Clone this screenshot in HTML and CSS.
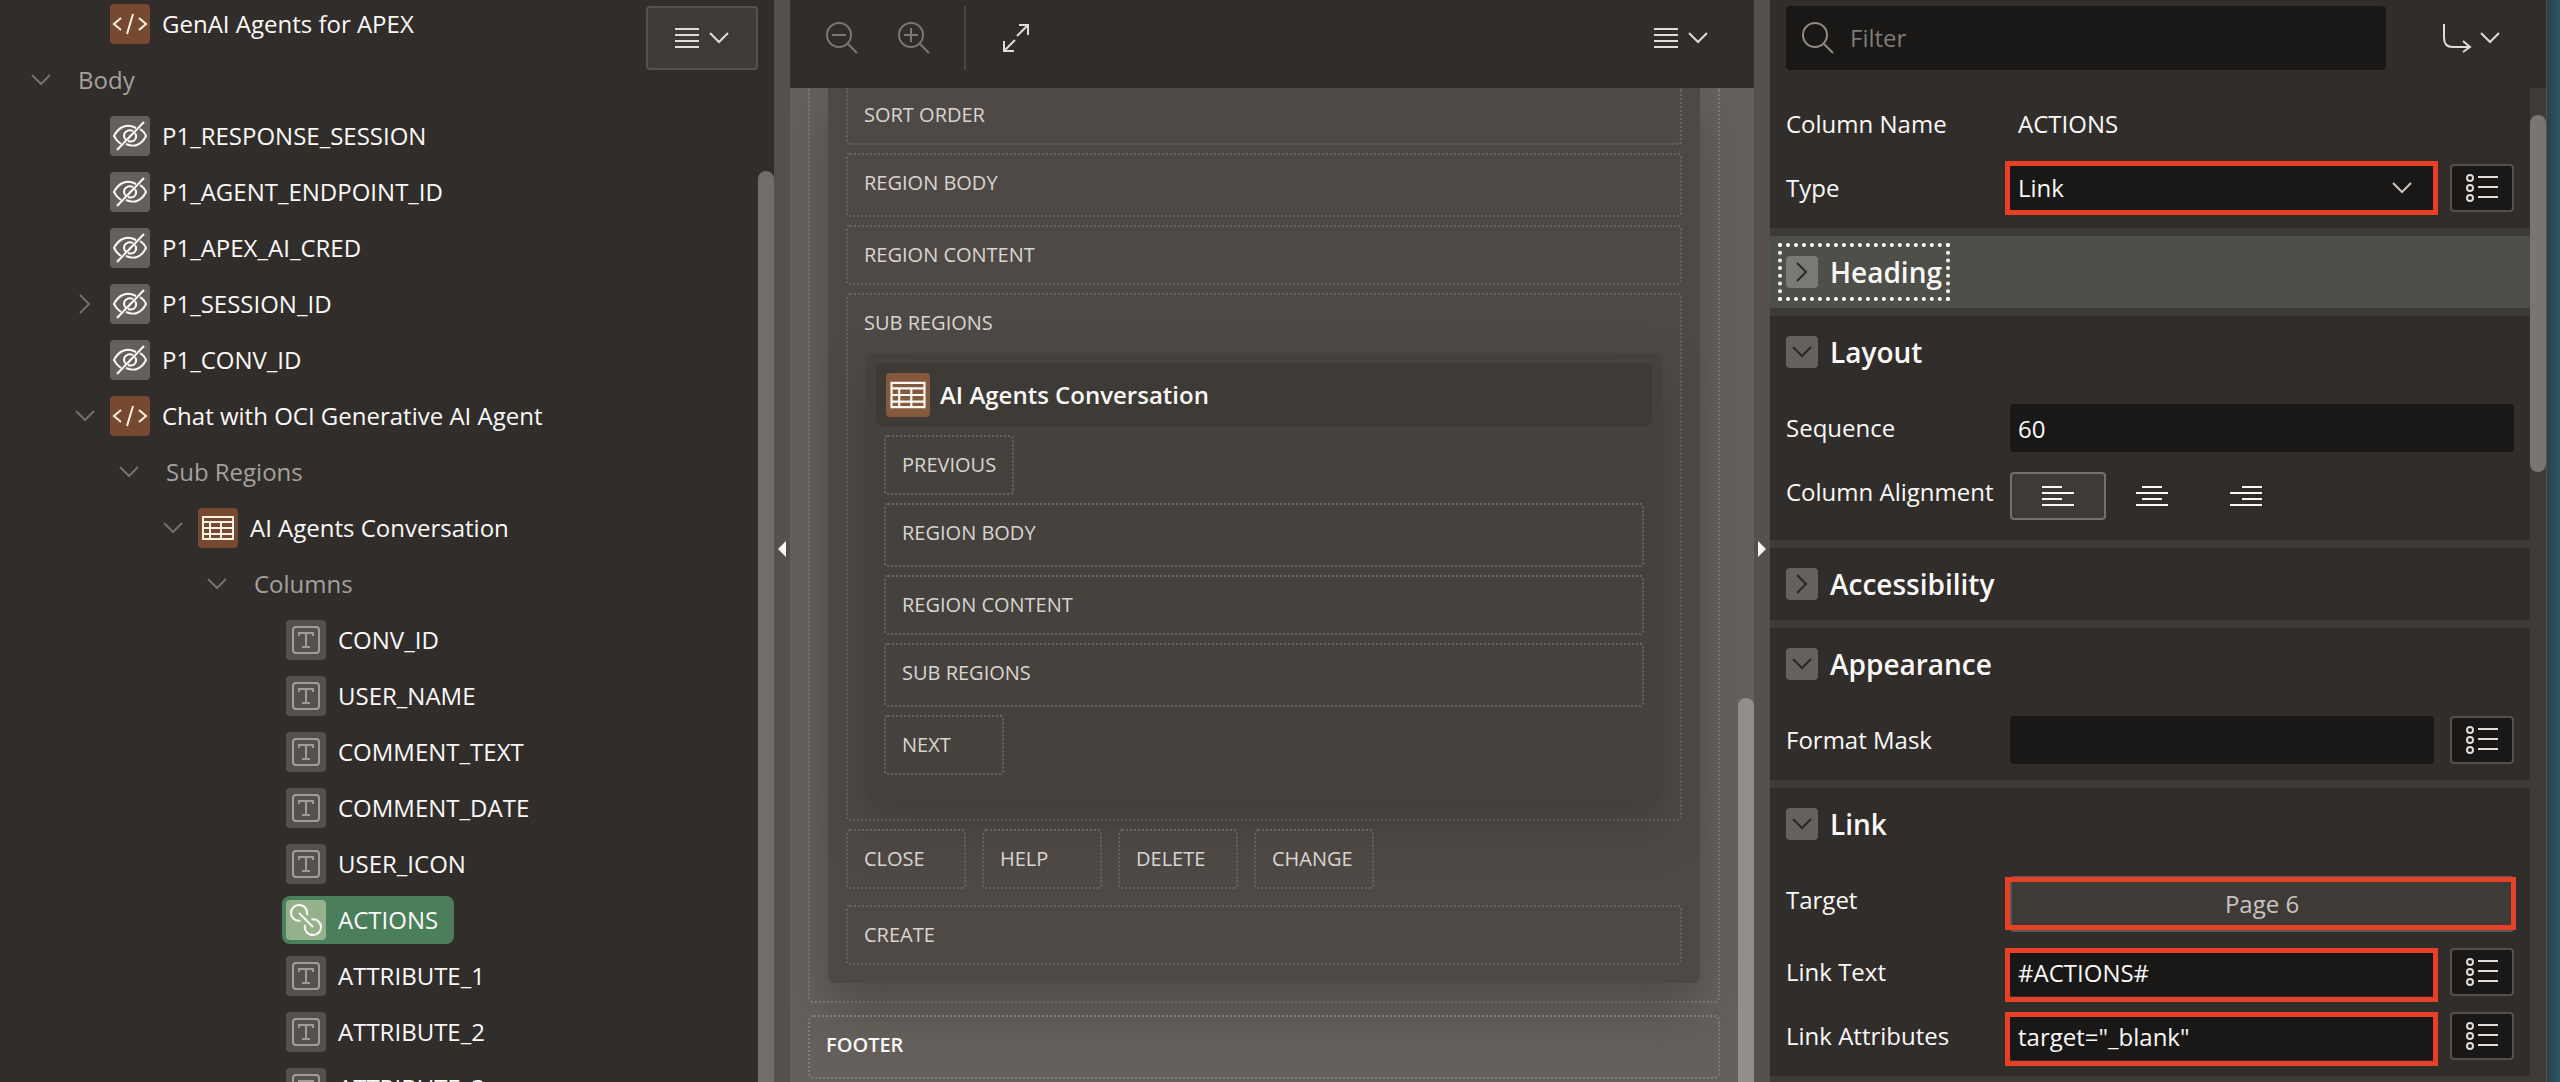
FILE: index.html
```
<!DOCTYPE html>
<html lang="en">
<head>
<meta charset="utf-8">
<title>Page Designer</title>
<link rel="stylesheet" href="styles.css">
</head>
<body>
<svg class="sprite" aria-hidden="true">
  <symbol id="chev-down" viewBox="0 0 20 12"><path d="M1 1l9 9 9-9" fill="none" stroke="currentColor" stroke-width="2"/></symbol>
  <symbol id="chev-right" viewBox="0 0 12 20"><path d="M1 1l9 9-9 9" fill="none" stroke="currentColor" stroke-width="2"/></symbol>
  <symbol id="code" viewBox="0 0 40 40"><path d="M11 14l-7 6 7 6M29 14l7 6-7 6M23 10l-6 20" fill="none" stroke="currentColor" stroke-width="2"/></symbol>
  <symbol id="hidden" viewBox="0 0 40 40"><g fill="none" stroke="currentColor" stroke-width="2"><path d="M26 12C14 6 7 14 4 20c2 4 4 6 7 8M30 13c3 2 5 4 6 7-4 8-11 12-20 8"/><path d="M23 15c-5-2-9 1-9 5 0 2 1 3 2 4M25 17c3 5-1 10-7 8M21 19l-3 4"/><path d="M34 6L7 34"/></g></symbol>
  <symbol id="grid" viewBox="0 0 40 40"><path d="M5 9h30v22H5zM5 14h30M5 20h30M5 26h30M12 14v17M23 14v17" fill="none" stroke="currentColor" stroke-width="2"/></symbol>
  <symbol id="text" viewBox="0 0 40 40"><g fill="none" stroke="currentColor" stroke-width="2"><rect x="7" y="7" width="26" height="26" rx="3"/><path d="M13 16v-3h14v3M20 13v14M16 27h8"/></g></symbol>
  <symbol id="link" viewBox="0 0 40 40"><g fill="none" stroke="currentColor" stroke-width="2"><path d="M14.500 20.500C9 22 5 17 5 13c0-4 3-8 8-8 5 0 9 4 8 10"/><path d="M25.500 19.500C31 18 35 23 35 27c0 4-3 8-8 8-5 0-9-4-8-10"/><path d="M13 13l14 14"/></g></symbol>
  <symbol id="menu" viewBox="0 0 24 20"><path d="M0 1h24M0 7h24M0 13h24M0 19h24" stroke="currentColor" stroke-width="2"/></symbol>
  <symbol id="zoom-out" viewBox="0 0 32 32"><g fill="none" stroke="currentColor" stroke-width="2"><circle cx="13" cy="13" r="12"/><path d="M22 22l9 9M6 13h14"/></g></symbol>
  <symbol id="zoom-in" viewBox="0 0 32 32"><g fill="none" stroke="currentColor" stroke-width="2"><circle cx="13" cy="13" r="12"/><path d="M22 22l9 9M6 13h14M13 6v14"/></g></symbol>
  <symbol id="search" viewBox="0 0 32 32"><g fill="none" stroke="currentColor" stroke-width="2"><circle cx="13" cy="13" r="12"/><path d="M22 22l9 9"/></g></symbol>
  <symbol id="expand" viewBox="0 0 28 30"><path d="M17 2h9v10M26 2L15 13M2 18v10h10M2 28l11-11" fill="none" stroke="currentColor" stroke-width="2"/></symbol>
  <symbol id="goto" viewBox="0 0 30 30"><path d="M2 1v14c0 6 3 9 9 9h17M21 18l7 6-7 5" fill="none" stroke="currentColor" stroke-width="2"/></symbol>
  <symbol id="list" viewBox="0 0 32 28"><g fill="none" stroke="currentColor" stroke-width="2"><circle cx="4" cy="4" r="3"/><circle cx="4" cy="14" r="3"/><circle cx="4" cy="24" r="3"/><path d="M12 3h20M12 13h20M12 23h20"/></g></symbol>
  <symbol id="al-left" viewBox="0 0 32 20"><path d="M0 1h20M0 7h32M0 13h20M0 19h32" stroke="currentColor" stroke-width="2"/></symbol>
  <symbol id="al-center" viewBox="0 0 32 20"><path d="M6 1h20M0 7h32M6 13h20M0 19h32" stroke="currentColor" stroke-width="2"/></symbol>
  <symbol id="al-right" viewBox="0 0 32 20"><path d="M12 1h20M0 7h32M12 13h20M0 19h32" stroke="currentColor" stroke-width="2"/></symbol>
</svg>

<div class="designer">
  <nav class="panel tree-panel" aria-label="Page tree">
    <ul class="tree">
      <li class="row l1"><span class="toggle"></span><span class="node"><svg class="type source"><use href="#code"/></svg>GenAI Agents for APEX</span></li>
      <li class="row l0"><button class="toggle" aria-label="Collapse"><svg class="down"><use href="#chev-down"/></svg></button><span class="node group">Body</span></li>
      <li class="row l1"><span class="toggle"></span><span class="node"><svg class="type item"><use href="#hidden"/></svg>P1_RESPONSE_SESSION</span></li>
      <li class="row l1"><span class="toggle"></span><span class="node"><svg class="type item"><use href="#hidden"/></svg>P1_AGENT_ENDPOINT_ID</span></li>
      <li class="row l1"><span class="toggle"></span><span class="node"><svg class="type item"><use href="#hidden"/></svg>P1_APEX_AI_CRED</span></li>
      <li class="row l1"><button class="toggle" aria-label="Expand"><svg class="right"><use href="#chev-right"/></svg></button><span class="node"><svg class="type item"><use href="#hidden"/></svg>P1_SESSION_ID</span></li>
      <li class="row l1"><span class="toggle"></span><span class="node"><svg class="type item"><use href="#hidden"/></svg>P1_CONV_ID</span></li>
      <li class="row l1"><button class="toggle" aria-label="Collapse"><svg class="down"><use href="#chev-down"/></svg></button><span class="node"><svg class="type source"><use href="#code"/></svg>Chat with OCI Generative AI Agent</span></li>
      <li class="row l2"><button class="toggle" aria-label="Collapse"><svg class="down"><use href="#chev-down"/></svg></button><span class="node group">Sub Regions</span></li>
      <li class="row l3"><button class="toggle" aria-label="Collapse"><svg class="down"><use href="#chev-down"/></svg></button><span class="node"><svg class="type source"><use href="#grid"/></svg>AI Agents Conversation</span></li>
      <li class="row l4"><button class="toggle" aria-label="Collapse"><svg class="down"><use href="#chev-down"/></svg></button><span class="node group">Columns</span></li>
      <li class="row l5"><span class="toggle"></span><span class="node"><svg class="type column"><use href="#text"/></svg>CONV_ID</span></li>
      <li class="row l5"><span class="toggle"></span><span class="node"><svg class="type column"><use href="#text"/></svg>USER_NAME</span></li>
      <li class="row l5"><span class="toggle"></span><span class="node"><svg class="type column"><use href="#text"/></svg>COMMENT_TEXT</span></li>
      <li class="row l5"><span class="toggle"></span><span class="node"><svg class="type column"><use href="#text"/></svg>COMMENT_DATE</span></li>
      <li class="row l5"><span class="toggle"></span><span class="node"><svg class="type column"><use href="#text"/></svg>USER_ICON</span></li>
      <li class="row l5"><span class="toggle"></span><span class="node selected"><svg class="type linked"><use href="#link"/></svg>ACTIONS</span></li>
      <li class="row l5"><span class="toggle"></span><span class="node"><svg class="type column"><use href="#text"/></svg>ATTRIBUTE_1</span></li>
      <li class="row l5"><span class="toggle"></span><span class="node"><svg class="type column"><use href="#text"/></svg>ATTRIBUTE_2</span></li>
      <li class="row l5"><span class="toggle"></span><span class="node"><svg class="type column"><use href="#text"/></svg>ATTRIBUTE_3</span></li>
    </ul>
    <button class="menu-btn boxed" aria-label="Tree menu"><svg class="menu"><use href="#menu"/></svg><svg class="down"><use href="#chev-down"/></svg></button>
    <div class="scroll tree-scroll"><div class="thumb"></div></div>
  </nav>

  <div class="splitter"><span class="arrow arrow-left"></span></div>

  <main class="panel layout-panel">
    <header class="toolbar">
      <button class="icon-btn dim" aria-label="Zoom out"><svg class="lens"><use href="#zoom-out"/></svg></button>
      <button class="icon-btn dim" aria-label="Zoom in"><svg class="lens"><use href="#zoom-in"/></svg></button>
      <span class="divider"></span>
      <button class="icon-btn" aria-label="Expand"><svg class="expand"><use href="#expand"/></svg></button>
      <button class="menu-btn push" aria-label="Layout menu"><svg class="menu"><use href="#menu"/></svg><svg class="down"><use href="#chev-down"/></svg></button>
    </header>
    <div class="canvas">
      <div class="stage">
        <section class="position body-position">
          <div class="region">
            <div class="slot cut">SORT ORDER</div>
            <div class="slot tall">REGION BODY</div>
            <div class="slot">REGION CONTENT</div>
            <div class="slot parent">
              <span>SUB REGIONS</span>
              <div class="subregion">
                <h2 class="region-title"><svg class="region-icon"><use href="#grid"/></svg>AI Agents Conversation</h2>
                <div class="slots">
                  <div class="slot small">PREVIOUS</div>
                  <div class="slot tall">REGION BODY</div>
                  <div class="slot">REGION CONTENT</div>
                  <div class="slot tall">SUB REGIONS</div>
                  <div class="slot small">NEXT</div>
                </div>
              </div>
            </div>
            <div class="slot-row">
              <div class="slot small">CLOSE</div>
              <div class="slot small">HELP</div>
              <div class="slot small">DELETE</div>
              <div class="slot small">CHANGE</div>
            </div>
            <div class="slot">CREATE</div>
          </div>
        </section>
        <section class="position footer-position">FOOTER</section>
      </div>
      <div class="scroll canvas-scroll"><div class="thumb"></div></div>
    </div>
  </main>

  <div class="splitter"><span class="arrow arrow-right"></span></div>

  <aside class="panel props">
    <header class="props-head">
      <label class="filter"><svg class="lens"><use href="#search"/></svg><input type="text" placeholder="Filter" aria-label="Filter"></label>
      <button class="menu-btn goto-btn" aria-label="Go to group"><svg class="goto"><use href="#goto"/></svg><svg class="down"><use href="#chev-down"/></svg></button>
    </header>
    <div class="props-body">
      <form class="groups">
        <section class="group-box first">
          <div class="field"><span class="label">Column Name</span><output class="value">ACTIONS</output></div>
          <div class="field">
            <label class="label" for="type">Type</label>
            <div class="control"><select id="type"><option>Link</option></select><svg class="down select-chev"><use href="#chev-down"/></svg><span class="mark"></span></div>
            <button type="button" class="lov" aria-label="Pick type"><svg><use href="#list"/></svg></button>
          </div>
        </section>
        <section class="group-box hot">
          <h3 class="group-head"><button type="button" class="disclose focused"><span class="fold"><svg class="right"><use href="#chev-right"/></svg></span>Heading</button></h3>
        </section>
        <section class="group-box">
          <h3 class="group-head"><button type="button" class="disclose"><span class="fold"><svg class="down"><use href="#chev-down"/></svg></span>Layout</button></h3>
          <div class="fields">
            <div class="field"><label class="label" for="seq">Sequence</label><div class="control"><input id="seq" type="text" value="60"></div></div>
            <div class="field">
              <span class="label">Column Alignment</span>
              <div class="align">
                <label class="pill on"><input type="radio" name="al" aria-label="Start" checked><svg><use href="#al-left"/></svg></label>
                <label class="pill"><input type="radio" name="al" aria-label="Center"><svg><use href="#al-center"/></svg></label>
                <label class="pill"><input type="radio" name="al" aria-label="End"><svg><use href="#al-right"/></svg></label>
              </div>
            </div>
          </div>
        </section>
        <section class="group-box">
          <h3 class="group-head"><button type="button" class="disclose"><span class="fold"><svg class="right"><use href="#chev-right"/></svg></span>Accessibility</button></h3>
        </section>
        <section class="group-box">
          <h3 class="group-head"><button type="button" class="disclose"><span class="fold"><svg class="down"><use href="#chev-down"/></svg></span>Appearance</button></h3>
          <div class="fields">
            <div class="field"><label class="label" for="mask">Format Mask</label><div class="control"><input id="mask" type="text"></div><button type="button" class="lov" aria-label="Pick format mask"><svg><use href="#list"/></svg></button></div>
          </div>
        </section>
        <section class="group-box">
          <h3 class="group-head"><button type="button" class="disclose"><span class="fold"><svg class="down"><use href="#chev-down"/></svg></span>Link</button></h3>
          <div class="fields">
            <div class="field"><label class="label" for="target">Target</label><div class="control"><button type="button" id="target" class="target">Page 6</button><span class="mark mark-target"></span></div></div>
            <div class="field"><label class="label" for="ltext">Link Text</label><div class="control"><input id="ltext" type="text" value="#ACTIONS#"><span class="mark mark-low"></span></div><button type="button" class="lov" aria-label="Pick link text"><svg><use href="#list"/></svg></button></div>
            <div class="field"><label class="label" for="lattr">Link Attributes</label><div class="control"><input id="lattr" type="text" value="target=&quot;_blank&quot;"><span class="mark mark-low"></span></div><button type="button" class="lov" aria-label="Pick link attributes"><svg><use href="#list"/></svg></button></div>
          </div>
        </section>
      </form>
      <div class="scroll props-scroll"><div class="thumb"></div></div>
    </div>
  </aside>
  <div class="desktop"></div>
</div>
</body>
</html>
```
FILE: styles.css
```
*, *::before, *::after { box-sizing: border-box; }

body {
  margin: 0;
  background: #312d2a;
  color: #fbf9f8;
  font: 24px/32px "Open Sans", "Noto Sans", sans-serif;
}

button, input, select { font: inherit; color: inherit; margin: 0; }
button { border: 0; padding: 0; background: none; cursor: pointer; }
h2, h3, ul { margin: 0; padding: 0; list-style: none; }
svg { display: block; flex: none; }
.sprite { position: absolute; width: 0; height: 0; }

.designer {
  display: grid;
  grid-template-columns: minmax(0, 774fr) 16px minmax(0, 964fr) 16px minmax(0, 776fr) 14px;
  grid-template-rows: 100vh;
  overflow: hidden;
}
.panel { background: #312d2a; overflow: hidden; }
.down { width: 20px; height: 12px; }
.right { width: 12px; height: 20px; }
.menu { width: 24px; height: 20px; }
.lens { width: 32px; height: 32px; }

/* page tree */
.tree-panel { display: flex; align-items: flex-start; }
.tree { flex: 1; margin-top: -4px; min-width: 0; }
.row { display: flex; align-items: center; height: 56px; white-space: nowrap; }
.l0 { padding-left: 20px; }
.l1 { padding-left: 64px; }
.l2 { padding-left: 108px; }
.l3 { padding-left: 152px; }
.l4 { padding-left: 196px; }
.l5 { padding-left: 240px; }
.toggle { width: 42px; height: 40px; display: grid; place-items: center; color: #74706c; flex: none; }
.node { display: flex; align-items: center; gap: 12px; height: 48px; padding: 0 16px 0 4px; border-radius: 8px; }
.group { padding-left: 16px; color: #a5a19e; }
.selected { background: #4b7e5a; }
.type { width: 40px; height: 40px; border-radius: 4px; }
.source { background: #764930; color: #fdf3e4; }
.item { background: #65605c; color: #fbf9f8; }
.column { background: #55504c; color: #a09c98; }
.linked { background: #96b28c; color: #fbf9f8; }

.menu-btn { display: flex; align-items: center; justify-content: center; gap: 10px; height: 64px; padding: 0 26px; color: #dfdcd9; }
.boxed { width: 112px; margin-top: 6px; border: 2px solid #55514c; border-radius: 4px; background: #3e3b36; }

.scroll { width: 16px; flex: none; align-self: stretch; display: flex; }
.thumb { flex: 1; border-radius: 8px; }
.tree-scroll { padding-top: 171px; }
.tree-scroll .thumb { background: #716d6a; border-radius: 8px 8px 0 0; }

/* splitters */
.splitter { background: #55504c; display: flex; align-items: center; justify-content: center; padding-top: 16px; }
.arrow { border: 8px solid transparent; border-width: 8px 0; }
.arrow-left { border-right: 8px solid #fbf9f8; }
.arrow-right { border-left: 8px solid #fbf9f8; }

/* layout editor */
.layout-panel { display: flex; flex-direction: column; }
.toolbar { flex: none; display: flex; align-items: flex-start; height: 88px; padding: 6px 20px 0 16px; }
.icon-btn { width: 72px; height: 64px; display: grid; place-items: center; color: #dfdcd9; }
.dim { color: #7b7773; }
.divider { width: 2px; height: 64px; margin: 0 14px; background: #4b4743; }
.expand { width: 28px; height: 30px; }
.push { margin-left: auto; }

.canvas { flex: 1; min-height: 0; display: flex; background: #65605b; overflow: hidden; }
.stage { flex: 1; min-width: 0; padding: 0 18px; display: flex; flex-direction: column; gap: 12px; }
.position { border: 2px dotted #827d78; border-radius: 6px; }
.body-position { border-top: 0; border-radius: 0 0 6px 6px; padding: 0 18px 18px; }
.footer-position { height: 64px; padding: 14px 16px; font-size: 20px; line-height: 28px; font-weight: 600; }
.region {
  display: flex; flex-direction: column; gap: 8px;
  padding: 0 18px 18px;
  background: #4f4945;
  border-radius: 0 0 8px 8px;
  box-shadow: 0 24px 48px rgba(49, 45, 42, .4);
}
.slot {
  min-height: 60px; padding: 14px 16px;
  border: 2px dotted #6a6560; border-radius: 4px;
  font-size: 20px; line-height: 28px; color: #d9d5d2;
}
.tall { min-height: 64px; }
.cut { min-height: 56px; border-top: 0; border-radius: 0 0 4px 4px; padding-top: 13px; }
.slot-row { display: flex; gap: 16px; margin-bottom: 8px; }
.small { min-width: 120px; align-self: flex-start; }
.parent { padding: 14px 18px 18px; }
.parent > span { margin-left: -2px; }
.subregion {
  margin-top: 16px; padding: 10px 10px 26px;
  background: #45413c; border-radius: 8px;
  box-shadow: 0 24px 48px rgba(49, 45, 42, .4);
}
.region-title {
  display: flex; align-items: center; gap: 10px;
  height: 64px; padding: 0 10px;
  background: #3e3a35; border-radius: 8px;
  font-size: 24px; font-weight: 600; color: #fbf9f8;
}
.region-icon { width: 44px; height: 44px; border-radius: 4px; background: #85593c; }
.slots { display: flex; flex-direction: column; gap: 8px; padding: 8px 8px 0; }
.canvas-scroll { padding-top: 610px; }
.canvas-scroll .thumb { background: #938e8a; border-radius: 8px 8px 0 0; }

/* property editor */
.props { display: flex; flex-direction: column; }
.props-head { flex: none; height: 88px; padding: 6px 20px 0 16px; display: flex; align-items: flex-start; }
.filter { flex: 1; max-width: 600px; height: 64px; display: flex; align-items: center; gap: 16px; padding: 0 16px; background: #191816; border-radius: 4px; color: #8f8b87; margin-right: auto; }
.filter input { flex: 1; min-width: 0; border: 0; padding: 0; background: none; outline: 0; }
.filter input::placeholder { color: #7f7b77; opacity: 1; }
.goto-btn { gap: 8px; }
.goto { width: 30px; height: 30px; }
.props-body { flex: 1; min-height: 0; display: flex; overflow: hidden; }
.groups { flex: 1; min-width: 0; display: flex; flex-direction: column; gap: 8px; background: #3e3b36; }
.group-box { background: #312d2a; flex: none; }
.first { padding: 12px 16px 16px; display: flex; flex-direction: column; gap: 16px; }
.hot { background: #4d4f48; }
.group-head { height: 72px; padding: 0 8px; display: flex; align-items: center; font-size: 28px; font-weight: 600; }
.disclose { display: flex; align-items: center; gap: 12px; height: 58px; padding: 0 4px; border: 4px solid transparent; }
.focused { border: 4px dotted #fbf9f8; }
.fold { width: 32px; height: 32px; border-radius: 4px; background: #65615d; display: grid; place-items: center; color: #2b2825; }
.hot .fold { background: #797a74; }
.fields { display: flex; flex-direction: column; gap: 16px; padding: 16px; }
.field { display: flex; align-items: flex-start; }
.label { flex: none; width: 224px; line-height: 48px; white-space: nowrap; }
.value { line-height: 48px; padding-left: 8px; }
.control { position: relative; flex: 1; min-width: 0; }
.control input, .control select {
  display: block; width: 100%; height: 48px; padding: 0 8px;
  border: 0; border-radius: 4px; background: #191816; outline: 0;
  appearance: none;
}
.select-chev { position: absolute; right: 22px; top: 18px; color: #c9c5c2; }
.lov { width: 64px; height: 48px; margin-left: 16px; border: 2px solid #55504c; border-radius: 4px; background: #191816; display: grid; place-items: center; color: #dfdcd9; }
.lov svg { width: 32px; height: 28px; }
.target { display: block; width: 100%; height: 56px; border: 2px solid #5b5752; border-radius: 4px; background: #3e3b36; color: #c9c5c2; }
.align { display: flex; padding: 4px 0; }
.pill { width: 96px; height: 48px; display: grid; place-items: center; border: 2px solid transparent; border-radius: 4px; }
.pill + .pill { margin-left: -2px; }
.pill.on { border-color: #74706b; background: #3e3b36; }
.pill input { position: absolute; opacity: 0; width: 1px; height: 1px; }
.pill svg { width: 32px; height: 20px; }
.props-scroll { background: #3e3a36; padding: 27px 0 0; }
.props-scroll .thumb { background: #7a7572; height: 357px; }

/* red call-out frames over the fields */
.mark { position: absolute; inset: -3px -4px -3px -5px; border: 5px solid #e93f26; pointer-events: none; }
.mark-target { inset: 1px -2px 2px -5px; }
.mark-low { inset: 0 -4px -6px -5px; }

.desktop { background: linear-gradient(90deg, #28424c, #2e5462); border-left: 1px solid #55504c; }
```
